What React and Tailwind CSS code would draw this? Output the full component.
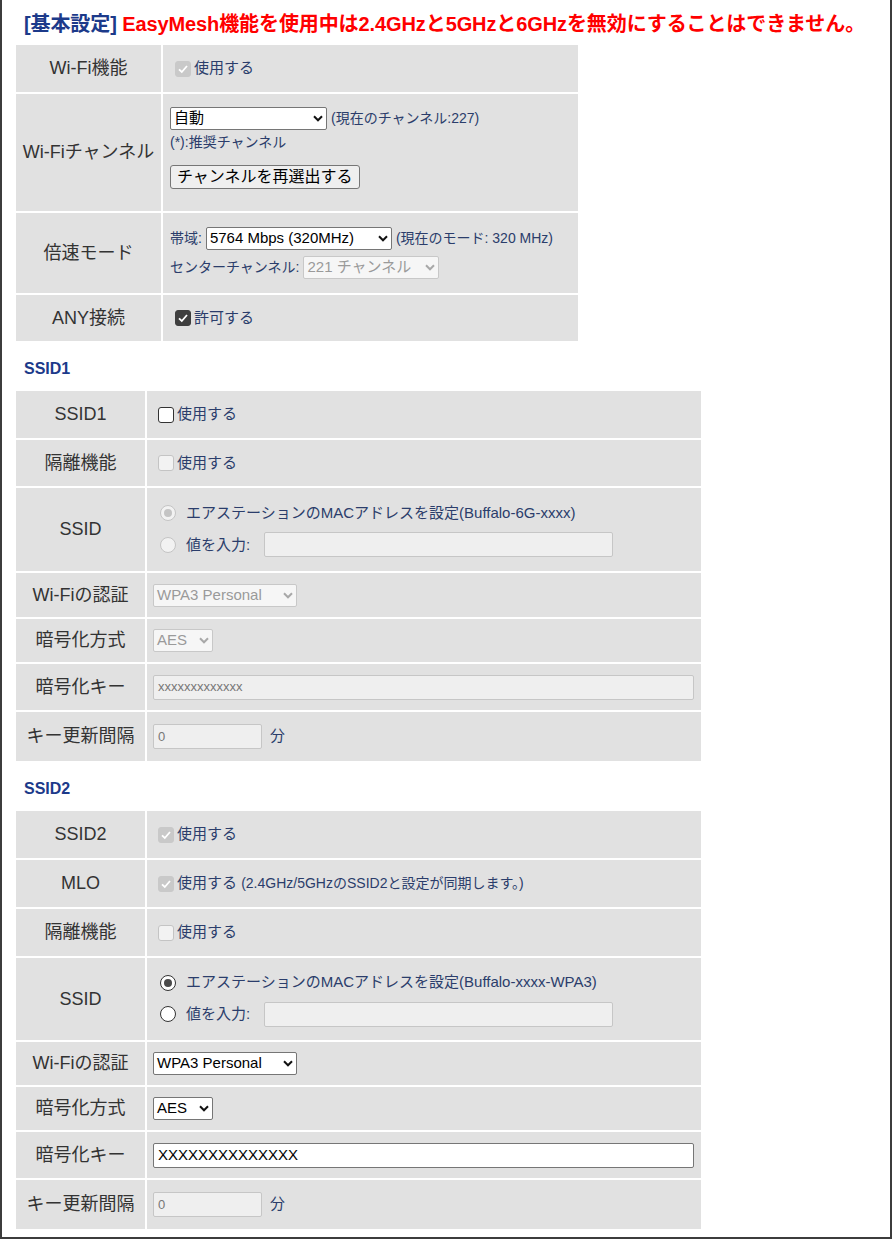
import React from "react";

const font = "font-['Liberation_Sans','Noto_Sans_CJK_JP',sans-serif]";

function Check({ checked, disabled }) {
  let box = "bg-white border-[#333]";
  if (disabled && checked) box = "bg-[#c9c9c9] border-[#c9c9c9]";
  else if (disabled) box = "bg-[#f2f2f2] border-[#c4c4c4]";
  else if (checked) box = "bg-[#3f3f3f] border-[#3f3f3f]";
  return (
    <span className={`w-4 h-4 rounded-[3px] border flex items-center justify-center shrink-0 ${box}`}>
      {checked && (
        <svg width="12" height="12" viewBox="0 0 12 12">
          <path d="M2 6.3 L4.8 9 L10 3" fill="none" stroke="white" strokeWidth="1.8" />
        </svg>
      )}
    </span>
  );
}

function Radio({ checked, disabled }) {
  const ring = disabled ? "border-[#c4c4c4] bg-[#f2f2f2]" : "border-[#333] bg-white";
  const dot = disabled ? "bg-[#c4c4c4]" : "bg-[#4a4a4a]";
  return (
    <span className={`w-4 h-4 rounded-full border flex items-center justify-center shrink-0 ${ring}`}>
      {checked && <span className={`w-2 h-2 rounded-full ${dot}`} />}
    </span>
  );
}

function Chevron({ disabled }) {
  return (
    <svg width="10" height="7" viewBox="0 0 10 7" className="shrink-0">
      <path d="M1 1.3 L5 5.3 L9 1.3" fill="none" stroke={disabled ? "#a8a8a8" : "#111"} strokeWidth="2" />
    </svg>
  );
}

function Select({ value, disabled, width }) {
  const look = disabled
    ? "bg-[#f6f6f6] border-[#c8c8c8] text-[#9a9a9a]"
    : "bg-white border-[#767676] text-black";
  return (
    <div className={`h-[23px] border rounded-[2px] flex items-center justify-between pl-[3px] pr-[3px] gap-1 text-[15px] ${look} ${width}`}>
      <span className="whitespace-nowrap">{value}</span>
      <Chevron disabled={disabled} />
    </div>
  );
}

function Input({ value, disabled, width }) {
  const look = disabled
    ? "bg-[#efefef] border-[#c6c6c6] text-[#777] text-[13px]"
    : "bg-white border-[#767676] text-black text-[15px]";
  return (
    <div className={`h-[25px] border rounded-[2px] flex items-center px-[4px] ${look} ${width}`}>
      {value}
    </div>
  );
}

function Row({ label, h, children, pad = "pl-[7px]" }) {
  return (
    <>
      <div className={`bg-[#e1e1e1] flex items-center justify-center text-[18px] text-[#333] whitespace-nowrap ${h}`}>
        {label}
      </div>
      <div className={`bg-[#e1e1e1] flex flex-col justify-center ${pad} text-[15px] text-[#2b3d6b]`}>
        {children}
      </div>
    </>
  );
}

function CheckText({ checked, disabled, children }) {
  return (
    <div className="flex items-center gap-[3px] ml-[5px]">
      <Check checked={checked} disabled={disabled} />
      <span>{children}</span>
    </div>
  );
}

function SsidRow({ first, h }) {
  const dis = first;
  return (
    <Row label="SSID" h={h}>
      <div className="flex flex-col gap-[8px] ml-[6px]">
        <div className="flex items-center gap-[10px]">
          <Radio checked disabled={dis} />
          <span>
            エアステーションのMACアドレスを設定({first ? "Buffalo-6G-xxxx" : "Buffalo-xxxx-WPA3"})
          </span>
        </div>
        <div className="flex items-center gap-[10px]">
          <Radio disabled={dis} />
          <span>値を入力:</span>
          <Input disabled width="w-[349px] ml-[4px]" />
        </div>
      </div>
    </Row>
  );
}

function Heading({ children }) {
  return <div className="text-[16px] font-bold text-[#1c3a8a] pl-[8px] pt-[16px] pb-[11px] leading-[23px]">{children}</div>;
}

export default function App() {
  return (
    <div className={`w-[892px] h-[1239px] bg-white border-x-2 border-b-2 border-[#3c3c3c] pl-[14px] ${font}`}>
      {/* Title */}
      <div className="pl-[8px] pt-[11px] pb-[8px] text-[20px] font-bold leading-[26px] whitespace-nowrap tracking-[-0.1px]">
        <span className="text-[#1c3a8a]">[基本設定]</span>
        <span className="text-[#ff0000]"> EasyMesh機能を使用中は2.4GHzと5GHzと6GHzを無効にすることはできません。</span>
      </div>

      {/* Basic settings */}
      <div className="grid grid-cols-[145px_415px] gap-[2px] w-[562px]">
        <Row label="Wi-Fi機能" h="h-[47px]">
          <CheckText checked disabled>使用する</CheckText>
        </Row>
        <Row label="Wi-Fiチャンネル" h="h-[117px]">
          <div className="flex items-center gap-[4px]">
            <Select value="自動" width="w-[157px]" />
            <span className="text-[14px]">(現在のチャンネル:227)</span>
          </div>
          <div className="text-[14px] mt-[2px]">(*):推奨チャンネル</div>
          <button className="mt-[12px] self-start h-[24px] px-[6px] bg-[#efefef] border border-[#767676] rounded-[3px] text-[16px] text-black leading-none">
            チャンネルを再選出する
          </button>
          <div className="h-[10px]" />
        </Row>
        <Row label="倍速モード" h="h-[80px]">
          <div className="flex items-center gap-[4px]">
            <span className="text-[14px]">帯域:</span>
            <Select value="5764 Mbps (320MHz)" width="w-[186px]" />
            <span className="text-[14px]">(現在のモード: 320 MHz)</span>
          </div>
          <div className="flex items-center gap-[4px] mt-[6px]">
            <span className="text-[14px]">センターチャンネル:</span>
            <Select value="221 チャンネル" disabled width="w-[136px]" />
          </div>
        </Row>
        <Row label="ANY接続" h="h-[46px]">
          <CheckText checked>許可する</CheckText>
        </Row>
      </div>

      <Heading>SSID1</Heading>
      <div className="grid grid-cols-[129px_554px] gap-[2px] w-[685px]">
        <Row label="SSID1" h="h-[47px]" pad="pl-[6px]">
          <CheckText>使用する</CheckText>
        </Row>
        <Row label="隔離機能" h="h-[46px]" pad="pl-[6px]">
          <CheckText disabled>使用する</CheckText>
        </Row>
        <SsidRow first h="h-[83px]" />
        <Row label="Wi-Fiの認証" h="h-[44px]" pad="pl-[6px]">
          <Select value="WPA3 Personal" disabled width="w-[144px]" />
        </Row>
        <Row label="暗号化方式" h="h-[43px]" pad="pl-[6px]">
          <Select value="AES" disabled width="w-[60px]" />
        </Row>
        <Row label="暗号化キー" h="h-[46px]" pad="pl-[6px]">
          <Input value="xxxxxxxxxxxxx" disabled width="w-[541px]" />
        </Row>
        <Row label="キー更新間隔" h="h-[49px]" pad="pl-[6px]">
          <div className="flex items-center gap-[8px]">
            <Input value="0" disabled width="w-[109px]" />
            <span>分</span>
          </div>
        </Row>
      </div>

      <Heading>SSID2</Heading>
      <div className="grid grid-cols-[129px_554px] gap-[2px] w-[685px]">
        <Row label="SSID2" h="h-[47px]" pad="pl-[6px]">
          <CheckText checked disabled>使用する</CheckText>
        </Row>
        <Row label="MLO" h="h-[47px]" pad="pl-[6px]">
          <CheckText checked disabled>
            使用する <span className="text-[14px]">(2.4GHz/5GHzのSSID2と設定が同期します。)</span>
          </CheckText>
        </Row>
        <Row label="隔離機能" h="h-[47px]" pad="pl-[6px]">
          <CheckText disabled>使用する</CheckText>
        </Row>
        <SsidRow h="h-[82px]" />
        <Row label="Wi-Fiの認証" h="h-[43px]" pad="pl-[6px]">
          <Select value="WPA3 Personal" width="w-[144px]" />
        </Row>
        <Row label="暗号化方式" h="h-[43px]" pad="pl-[6px]">
          <Select value="AES" width="w-[60px]" />
        </Row>
        <Row label="暗号化キー" h="h-[46px]" pad="pl-[6px]">
          <Input value="XXXXXXXXXXXXXX" width="w-[541px]" />
        </Row>
        <Row label="キー更新間隔" h="h-[49px]" pad="pl-[6px]">
          <div className="flex items-center gap-[8px]">
            <Input value="0" disabled width="w-[109px]" />
            <span>分</span>
          </div>
        </Row>
      </div>
    </div>
  );
}
